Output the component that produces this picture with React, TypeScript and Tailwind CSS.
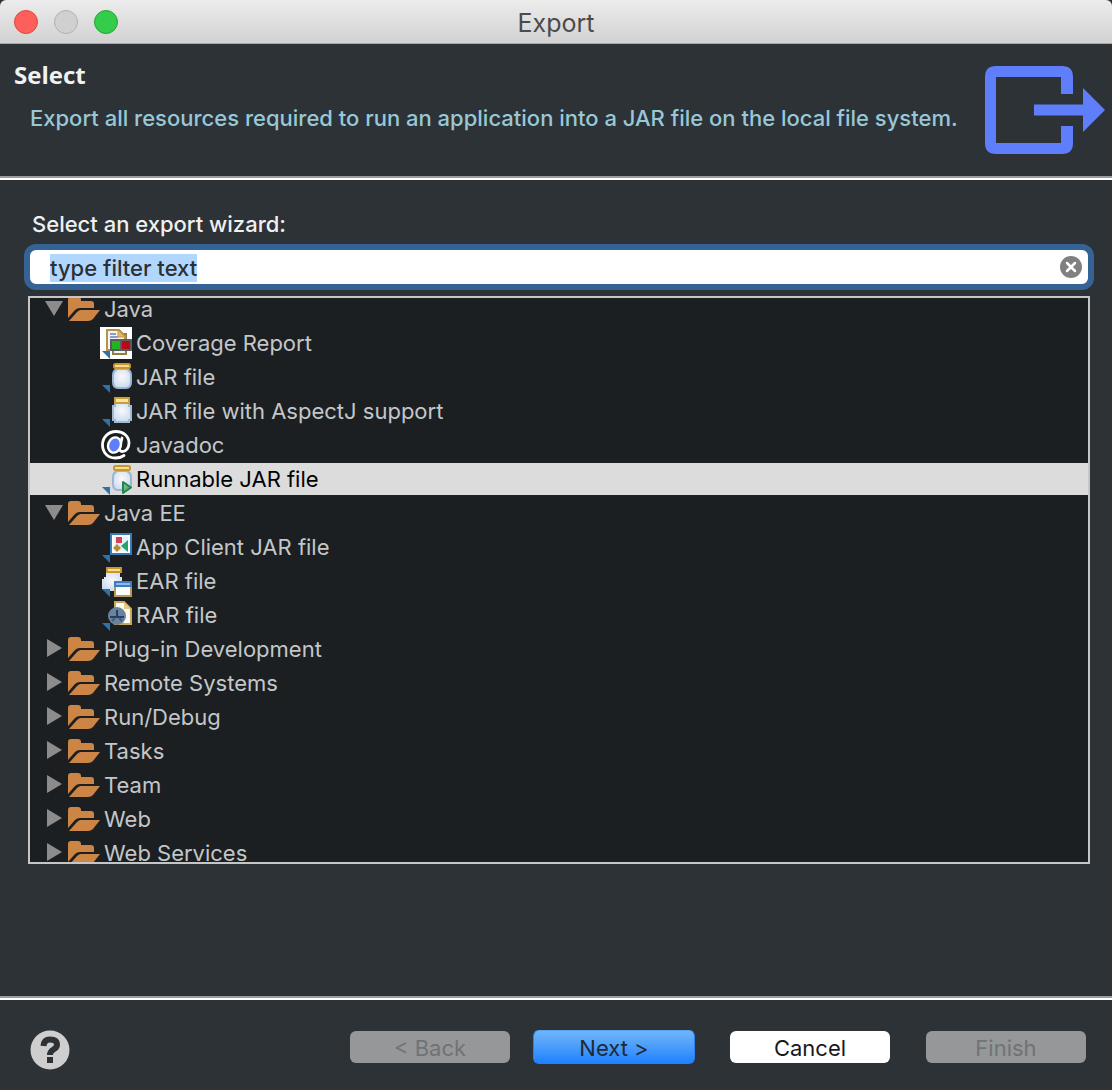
import { useEffect, useRef, useState, type ReactNode } from "react";

const LinkMark = () => <path d="M2 24h8v8z" fill="#2f72ab" />;

function Folder() {
  return (
    <svg viewBox="0 0 32 32" className="size-8 shrink-0" fill="#cc8545" aria-hidden="true">
      <path d="M0 7Q0 4 3 4H10Q13 4 13 7V8H23Q26 8 26 11V15H12Q9 15 7 17L0 25Z" />
      <path d="M13 17H32L25 26Q23 28 20 28H1L9 19Q11 17 13 17Z" />
    </svg>
  );
}

function Icon({ children }: { children: ReactNode }) {
  return (
    <svg viewBox="0 0 32 32" className="size-8 shrink-0" aria-hidden="true">
      {children}
    </svg>
  );
}

const Defs = () => (
  <svg className="absolute size-0" aria-hidden="true">
    <defs>
      <radialGradient id="glass" cx="0.5" cy="0.4" r="0.6">
        <stop offset="0" stopColor="#fafaf8" />
        <stop offset="1" stopColor="#ccdcf0" />
      </radialGradient>
      <linearGradient id="play" x1="0" y1="0" x2="1" y2="1">
        <stop offset="0" stopColor="#8fd08f" />
        <stop offset="1" stopColor="#2f9a5c" />
      </linearGradient>
    </defs>
  </svg>
);

const Lid = () => (
  <rect x="14" y="3" width="16" height="4" rx="1.5" fill="#f8dc8a" stroke="#c7962c" strokeWidth="2" />
);

const JarBody = () => (
  <path
    d="M17 8H27Q31 10 31 14V21Q31 27 26 27H18Q13 27 13 21V14Q13 10 17 8Z"
    fill="url(#glass)"
    stroke="#9db4d2"
    strokeWidth="2"
  />
);

const icons: Record<string, ReactNode> = {
  coverage: (
    <Icon>
      <path d="M0 0h32v32H0z" fill="#fff" />
      <path d="M13 7H26V27H13Z" fill="#f5f5ef" stroke="#8f7f50" strokeWidth="2" />
      <path d="M7 3H19L25 9V23H7Z" fill="#f3f4fa" stroke="#b7924b" strokeWidth="2" />
      <path d="M18 3L25 10H18Z" fill="#e5b968" stroke="#c79a4b" />
      <path d="M10 7h6M10 10h8" stroke="#8a9cc9" strokeWidth="2" />
      <path d="M10 12H32V24H10Z" fill="#5b5b60" />
      <path d="M12 14h8v8h-8z" fill="#22b222" />
      <path d="M22 14h8v8h-8z" fill="#b40c14" />
      <LinkMark />
    </Icon>
  ),
  jar: (
    <Icon>
      <JarBody />
      <Lid />
      <LinkMark />
    </Icon>
  ),
  aspectj: (
    <Icon>
      <path
        d="M15 8H29V11H31V25H29V27H15V25H13V11H15Z"
        fill="url(#glass)"
        stroke="#a5b9d0"
        strokeWidth="2"
      />
      <path d="M15 3h14v5H15z" fill="#f8e29e" stroke="#c7a03a" strokeWidth="2" />
      <LinkMark />
    </Icon>
  ),
  javadoc: (
    <Icon>
      <g fill="none" stroke="#fff" strokeLinecap="round" strokeWidth="2.8">
        <path d="M24 26.500Q20 29.200 15 29C7.500 29 2.500 23 2.500 16C2.500 8.500 8 2.500 16 2.500C23.500 2.500 29 7.500 29 14C29 19 26 22.500 22.500 22.500C20 22.500 19.300 21 19.800 18.500L22 9" />
        <ellipse cx="14.5" cy="16" rx="6.3" ry="7.8" transform="rotate(20 14.5 16)" fill="#5f7efc" strokeWidth="2.4" />
      </g>
    </Icon>
  ),
  runnable: (
    <Icon>
      <JarBody />
      <Lid />
      <path d="M23 19L31 24.500L23 30Z" fill="url(#play)" stroke="#238451" strokeWidth="2" strokeLinejoin="round" />
      <LinkMark />
    </Icon>
  ),
  client: (
    <Icon>
      <path d="M11 3h20v20H11z" fill="#e6f2fa" stroke="#357db7" strokeWidth="2" />
      <path d="M13 5h16v16H13z" fill="none" stroke="#fff" strokeWidth="2" />
      <path d="M16 6h6v6h-6z" fill="#dc3f55" />
      <path d="M28 9V21L21 15Z" fill="#27a269" />
      <path d="M16 14h2v2h2v2h-2v2h-2v-2h-2v-2h2z" fill="#b98a27" stroke="#b98a27" />
      <LinkMark />
    </Icon>
  ),
  ear: (
    <Icon>
      <path d="M6 8H20V12H22V26H4V24H2V14H4V12H6Z" fill="url(#glass)" />
      <path d="M7 3h14v4H7z" fill="#f8df95" stroke="#c7962c" strokeWidth="2" />
      <path d="M15 21h16v10H15z" fill="#f7fcff" stroke="#b79a5a" strokeWidth="2" />
      <path d="M14 16h18v6H14z" fill="#427bbd" />
      <path d="M16 18h14v2H16z" fill="#8bbbea" />
      <LinkMark />
    </Icon>
  ),
  rar: (
    <Icon>
      <path d="M15 3H24L31 10V25H15Z" fill="#fafaf4" stroke="#c9a75a" strokeWidth="2" />
      <path d="M24 3V10H31Z" fill="#e8c77e" />
      <circle cx="17" cy="17" r="9" fill="#6b839c" />
      <path d="M17 11v6M10 18h14" stroke="#263e64" strokeWidth="2" />
      <path d="M12 22l3-3M22 22l-3-3" stroke="#425c7e" strokeWidth="2" />
      <LinkMark />
    </Icon>
  ),
};

type Row = { label: string; icon?: string; open?: boolean };

const rows: Row[] = [
  { label: "Java", open: true },
  { label: "Coverage Report", icon: "coverage" },
  { label: "JAR file", icon: "jar" },
  { label: "JAR file with AspectJ support", icon: "aspectj" },
  { label: "Javadoc", icon: "javadoc" },
  { label: "Runnable JAR file", icon: "runnable" },
  { label: "Java EE", open: true },
  { label: "App Client JAR file", icon: "client" },
  { label: "EAR file", icon: "ear" },
  { label: "RAR file", icon: "rar" },
  { label: "Plug-in Development" },
  { label: "Remote Systems" },
  { label: "Run/Debug" },
  { label: "Tasks" },
  { label: "Team" },
  { label: "Web" },
  { label: "Web Services" },
];

function Disclosure({ open }: { open?: boolean }) {
  return (
    <svg viewBox="0 0 18 32" className="mr-[5px] h-8 w-[18px] shrink-0" fill="#8c8c8c" aria-hidden="true">
      <path d={open ? "M0 8H18L9 23Z" : "M2 6L17 15L2 24Z"} />
    </svg>
  );
}

const Rule = () => <div className="h-1 shrink-0 border-t-2 border-[#9c9c9c] bg-white" />;

export default function App() {
  const [selected, setSelected] = useState("Runnable JAR file");
  const [filter, setFilter] = useState("type filter text");
  const input = useRef<HTMLInputElement>(null);

  useEffect(() => {
    input.current?.focus();
    input.current?.select();
  }, []);

  return (
    <div className="flex h-screen flex-col bg-[#2d3236] font-[Inter,'Liberation_Sans',sans-serif] text-[22px] leading-8 text-[#c3c7ca]">
      <Defs />
      <header className="grid h-11 shrink-0 grid-cols-[1fr_auto_1fr] items-center rounded-t-md border-b border-[#a9a9a9] bg-linear-to-b from-[#ececec] to-[#d2d2d2] px-3.5">
        <div className="flex gap-4">
          <button aria-label="Close" className="size-6 rounded-full border border-[#e2463f] bg-[#fd605b]" />
          <button aria-label="Minimize" className="size-6 rounded-full border border-[#b2b2b2] bg-[#d0d0d0]" />
          <button aria-label="Zoom" className="size-6 rounded-full border border-[#1fa931] bg-[#35cb4b]" />
        </div>
        <h1 className="pt-0.5 text-[25px] text-[#4b4b4b]">Export</h1>
      </header>

      <section className="flex h-[132px] shrink-0 justify-between pl-3.5 pr-[7px]">
        <div className="pt-[15px]">
          <h2 className="font-['Open_Sans','Noto_Sans',sans-serif] text-2xl leading-8 font-bold text-[#f1f1f1]">
            Select
          </h2>
          <p className="mt-[11px] pl-4 font-medium whitespace-nowrap text-[#98c8d8]">
            Export all resources required to run an application into a JAR file on the local file system.
          </p>
        </div>
        <svg viewBox="0 0 120 88" className="mt-[22px] h-[88px] w-[120px] shrink-0" aria-hidden="true">
          <path
            d="M11 0H77Q88 0 88 11V28H76V11H11V77H76V60H88V77Q88 88 77 88H11Q0 88 0 77V11Q0 0 11 0Z"
            fill="#5f7efc"
          />
          <path d="M49 38.500H98V22L120 44L98 66V49.500H49Z" fill="#5f7efc" />
        </svg>
      </section>
      <Rule />

      <main className="flex min-h-0 flex-1 flex-col pt-7 pr-[18px] pb-[132px] pl-6">
        <label htmlFor="filter" className="pl-2 font-medium text-[#f0f0f0]">
          Select an export wizard:
        </label>
        <div className="mt-1 flex h-[46px] shrink-0 items-center rounded-xl border-6 border-[#356395] bg-white pr-1.5 pl-5">
          <input
            id="filter"
            ref={input}
            value={filter}
            onChange={(e) => setFilter(e.target.value)}
            className="mt-0.5 h-7 min-w-0 flex-1 bg-transparent leading-7 font-medium text-[#2c3033] outline-none selection:bg-[#b2d7ff] selection:text-[#2c3033]"
          />
          <button aria-label="Clear" onClick={() => setFilter("")}>
            <svg viewBox="0 0 22 22" className="size-[22px]" aria-hidden="true">
              <circle cx="11" cy="11" r="11" fill="#808080" />
              <path d="M7 7l8 8M15 7l-8 8" stroke="#fff" strokeWidth="2.5" strokeLinecap="round" />
            </svg>
          </button>
        </div>
        <div className="mx-1 mt-1.5 min-h-0 flex-1 overflow-hidden border-2 border-[#c6c6c6] bg-[#1c1f21]">
          <ul role="tree" className="-mt-[5px] flex flex-col gap-0.5">
            {rows.map((row) => {
              const active = row.label === selected;
              return (
                <li key={row.label} role="treeitem" aria-selected={active} aria-expanded={row.icon ? undefined : !!row.open}>
                  <button
                    onClick={() => setSelected(row.label)}
                    className={`flex h-8 w-full items-center gap-1 text-left ${row.icon ? "pl-[70px]" : "pl-[15px]"} ${active ? "bg-[#dcdcdc] text-black" : ""}`}
                  >
                    {row.icon ? (
                      icons[row.icon]
                    ) : (
                      <span className="flex">
                        <Disclosure open={row.open} />
                        <Folder />
                      </span>
                    )}
                    <span>{row.label}</span>
                  </button>
                </li>
              );
            })}
          </ul>
        </div>
      </main>
      <Rule />

      <footer className="flex h-[90px] shrink-0 items-center pt-1 pr-[26px] pl-[30px]">
        <button aria-label="Help" className="mt-1.5 mr-auto">
          <svg viewBox="0 0 40 40" className="size-10" aria-hidden="true">
            <circle cx="20" cy="20" r="19.5" fill="#cecece" />
            <path
              d="M13.500 16Q14 9.500 20 9.500Q27 9.500 27 14.500Q27 17.500 23.500 19.500Q20 21.500 20 25"
              fill="none"
              stroke="#2d3236"
              strokeWidth="6"
            />
            <path d="M17 27h6v6h-6z" fill="#2d3236" />
          </svg>
        </button>
        <button disabled className="h-8 w-40 rounded-md bg-[#959799] pt-px leading-8 text-[#707375]">
          &lt; Back
        </button>
        <button className="mx-[23px] h-[34px] w-[162px] rounded-md border border-[#2d7df5] border-t-[#5aa5f5] bg-linear-to-b from-[#6fb4f8] to-[#1a82fe] pt-px leading-8 text-[#1f2a36]">
          Next &gt;
        </button>
        <button className="mr-9 ml-3 h-8 w-40 rounded-md bg-white pt-px leading-8 text-[#18191b]">Cancel</button>
        <button disabled className="h-8 w-40 rounded-md bg-[#959799] pt-px leading-8 text-[#707375]">
          Finish
        </button>
      </footer>
    </div>
  );
}
